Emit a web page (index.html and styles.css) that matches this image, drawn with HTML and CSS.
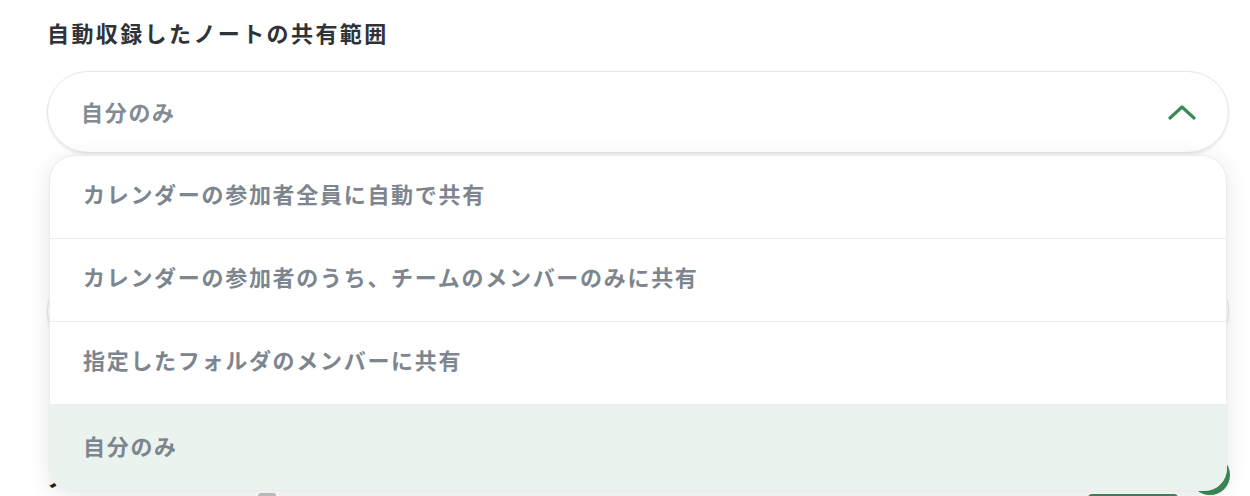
FILE: index.html
```html
<!DOCTYPE html>
<html lang="ja">
<head>
<meta charset="utf-8">
<title>共有範囲</title>
<link rel="stylesheet" href="styles.css">
</head>
<body>
<div class="page">
  <div class="label">自動収録したノートの共有範囲</div>
  <div class="field">
    <div class="select">
      <span class="select-value">自分のみ</span>
      <svg class="chevron" width="28" height="16" viewBox="0 0 28 16"><path d="M2 14 L14 3 L26 14" fill="none" stroke="#3a8a55" stroke-width="3.2" stroke-linecap="round" stroke-linejoin="round"/></svg>
    </div>
    <ul class="menu">
      <li class="option">カレンダーの参加者全員に自動で共有</li>
      <li class="option">カレンダーの参加者のうち、チームのメンバーのみに共有</li>
      <li class="option">指定したフォルダのメンバーに共有</li>
      <li class="option selected">自分のみ</li>
    </ul>
  </div>
  <div class="select second"></div>
  <div class="title-row">
    <span class="section-title">ノート</span>
    <span class="spacer"></span>
    <span class="green-dot"></span>
  </div>
  <div class="bottom-row">
    <span class="grey-chip"></span>
    <span class="spacer"></span>
    <span class="green-btn"></span>
  </div>
</div>
</body>
</html>
```
FILE: styles.css
```css
html, body {
  margin: 0;
  padding: 0;
  background: #ffffff;
  overflow: hidden;
}
body {
  font-family: "Noto Sans CJK JP", "Noto Sans", sans-serif;
  width: 1250px;
  height: 496px;
}
.page {
  box-sizing: border-box;
  height: 496px;
  overflow: hidden;
  padding: 18px 21px 0 47px;
  display: flex;
  flex-direction: column;
}
.label {
  font-size: 22px;
  line-height: 28px;
  font-weight: 700;
  color: #2f3337;
  letter-spacing: 2.4px;
}
.field {
  position: relative;
  margin-top: 25px;
  z-index: 2;
}
.select {
  box-sizing: border-box;
  flex-shrink: 0;
  height: 82px;
  border: 1px solid #e6e6e6;
  border-radius: 41px;
  background: #fff;
  box-shadow: 0 2px 3px rgba(0,0,0,0.08);
  display: flex;
  align-items: center;
  justify-content: space-between;
  padding: 0 32px 2px 33px;
}
.select-value {
  font-size: 22px;
  font-weight: 600;
  color: #838b93;
  letter-spacing: 1.7px;
}
.chevron {
  display: block;
  margin-top: 2px;
}
.menu {
  list-style: none;
  margin: 0;
  padding: 0;
  position: absolute;
  left: 2px;
  right: 2px;
  top: 84px;
  background: #fff;
  border: 1px solid #ececec;
  border-radius: 26px 26px 22px 22px;
  box-shadow: 0 4px 22px rgba(0,0,0,0.10);
  overflow: hidden;
}
.option {
  box-sizing: border-box;
  height: 83px;
  display: flex;
  align-items: center;
  padding: 0 0 8px 33px;
  font-size: 22px;
  font-weight: 600;
  color: #7d868f;
  letter-spacing: 1.7px;
  border-bottom: 1px solid #ececec;
}
.option.selected {
  background: #eaf3ee;
  border-bottom: none;
  height: 85px;
  padding-top: 2px;
}
.second {
  margin-top: 117px;
}
.title-row {
  display: flex;
  align-items: flex-start;
  flex-shrink: 0;
  margin-top: 111px;
  height: 28px;
}
.section-title {
  font-size: 22px;
  line-height: 28px;
  font-weight: 700;
  color: #222;
  letter-spacing: 2.4px;
}
.spacer { flex: 1; }
.green-dot {
  width: 40px;
  height: 40px;
  margin: -8px -1px 0 0;
  border-radius: 50%;
  background: #3a8a55;
  flex-shrink: 0;
}
.bottom-row {
  display: flex;
  align-items: flex-start;
  flex-shrink: 0;
  margin-top: 3px;
  height: 30px;
}
.grey-chip {
  margin: -1px 0 0 211px;
  width: 18px;
  height: 6px;
  border-radius: 3px;
  background: #bfc3c7;
}
.green-btn {
  margin-right: 51px;
  width: 90px;
  height: 20px;
  background: #3a8a55;
  border-radius: 4px;
}
```
